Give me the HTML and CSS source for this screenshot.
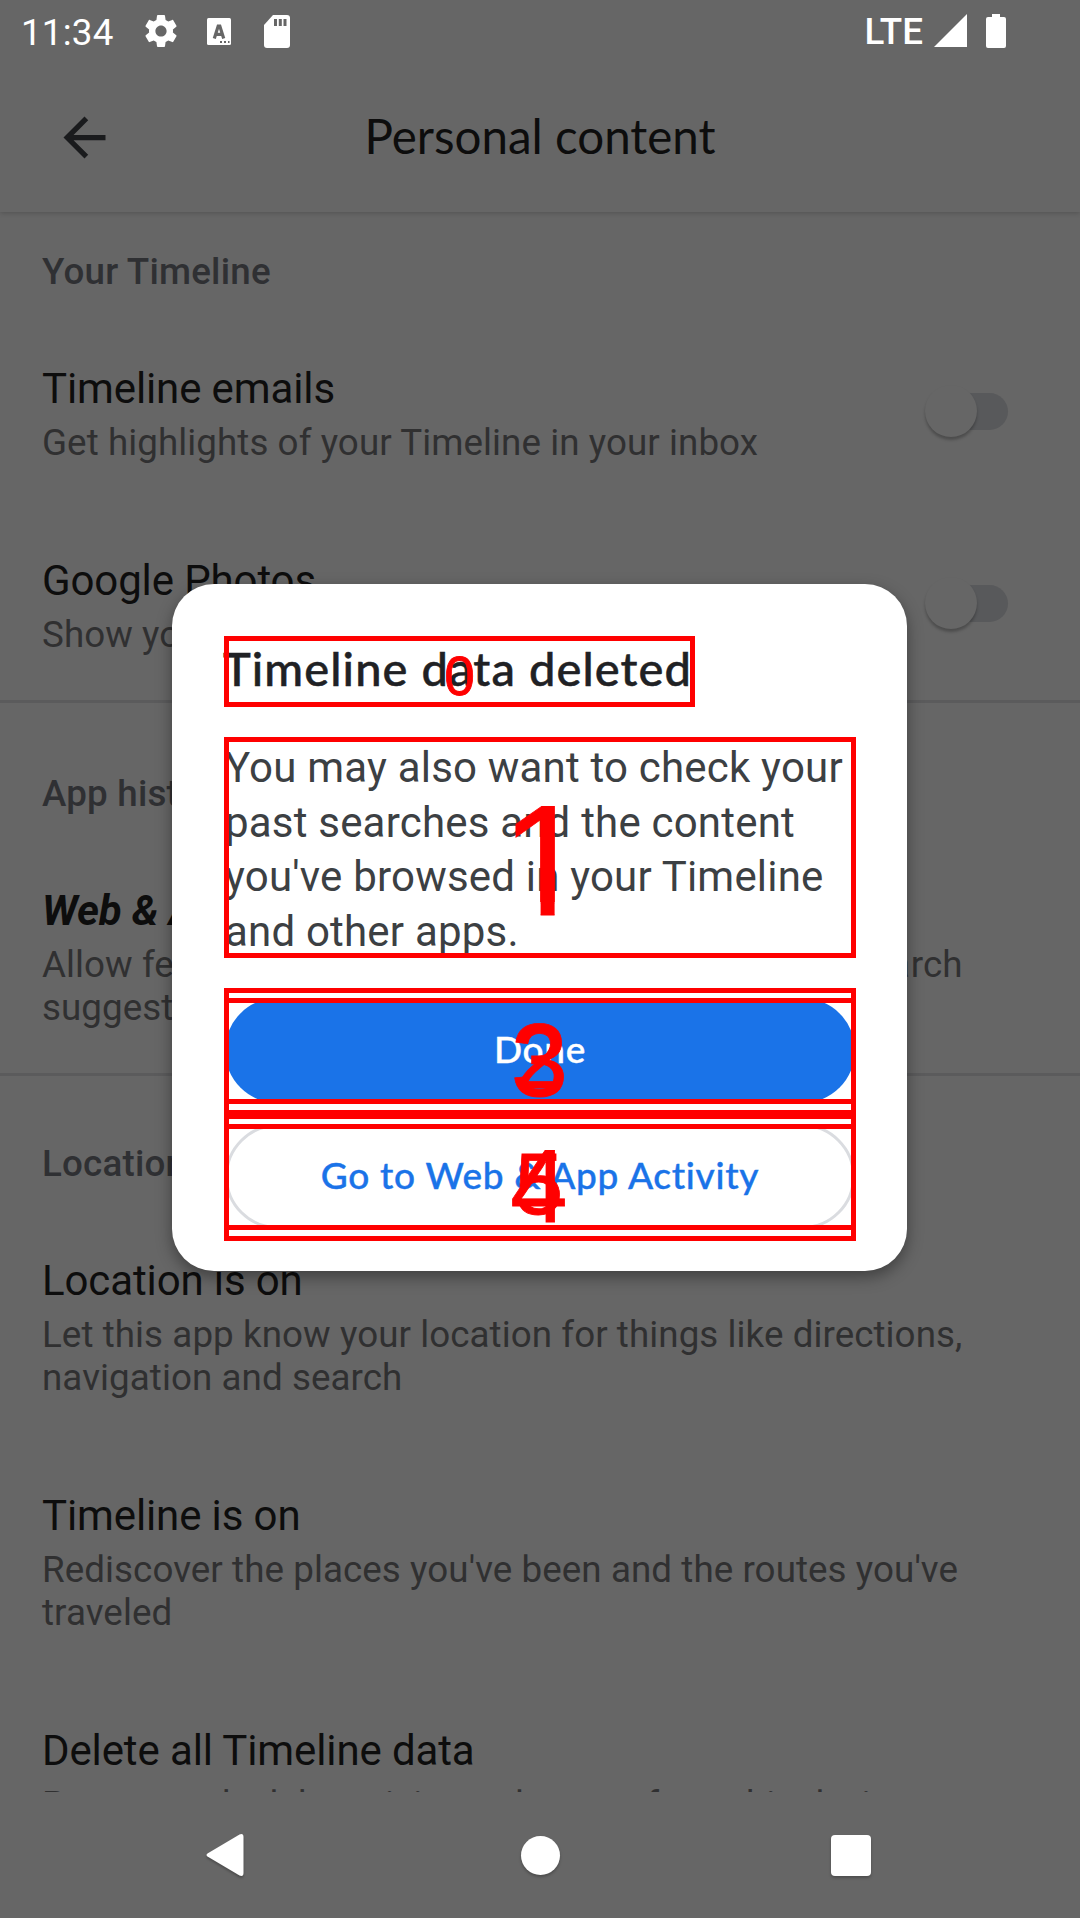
FILE: index.html
```html
<!DOCTYPE html>
<html lang="en">
<head>
<meta charset="utf-8">
<title>Personal content</title>
<link rel="stylesheet" href="styles.css">
</head>
<body>
<div class="screen">
  <header class="status">
    <span class="clock">11:34</span>
    <svg class="gear" viewBox="2 2 20 20"><path fill-rule="evenodd" d="M19.43 12.98c.04-.32.07-.64.07-.98s-.03-.66-.07-.98l2.11-1.65c.19-.15.24-.42.12-.64l-2-3.46c-.12-.22-.39-.3-.61-.22l-2.49 1c-.52-.4-1.08-.73-1.69-.98l-.38-2.65C14.46 2.18 14.25 2 14 2h-4c-.25 0-.46.18-.49.42l-.38 2.65c-.61.25-1.17.59-1.69.98l-2.49-1c-.23-.09-.49 0-.61.22l-2 3.46c-.13.22-.07.49.12.64l2.11 1.65c-.04.32-.07.65-.07.98s.03.66.07.98l-2.11 1.65c-.19.15-.24.42-.12.64l2 3.46c.12.22.39.3.61.22l2.49-1c.52.4 1.08.73 1.69.98l.38 2.65c.03.24.24.42.49.42h4c.25 0 .46-.18.49-.42l.38-2.65c.61-.25 1.17-.59 1.69-.98l2.49 1c.23.09.49 0 .61-.22l2-3.46c.12-.22.07-.49-.12-.64l-2.11-1.65zM12 15.500c-1.930 0-3.500-1.570-3.500-3.500s1.570-3.500 3.500-3.500 3.500 1.570 3.500 3.500-1.570 3.500-3.500 3.500z"/></svg>
    <svg class="keyboard" viewBox="0 0 24 27"><rect width="24" height="27" rx="1.500"/><path class="cut" d="M7.300 20.500 11.200 8h1.600l3.900 12.500M8.500 16.300h7"/><path class="dots" d="M13 24h2M17 24h2M21 24h1.500"/></svg>
    <svg class="sdcard" viewBox="0 0 26 33"><path d="M9 0h14a3 3 0 0 1 3 3v27a3 3 0 0 1-3 3H3a3 3 0 0 1-3-3V10z"/><path class="pins" d="M11.500 4v7M16.300 4v7M21 4v7"/></svg>
    <span class="lte">LTE</span>
    <svg class="signal" viewBox="0 0 33 33"><path d="M33 0v33H0z"/></svg>
    <svg class="battery" viewBox="0 0 20 34"><path d="M6 0h8v3h4a2 2 0 0 1 2 2v27a2 2 0 0 1-2 2H2a2 2 0 0 1-2-2V5a2 2 0 0 1 2-2h4z"/></svg>
  </header>

  <div class="toolbar">
    <svg class="back" viewBox="0 0 24 24"><path d="M20 11H7.830l5.590-5.590L12 4l-8 8 8 8 1.410-1.410L7.830 13H20v-2z"/></svg>
    <h1>Personal content</h1>
  </div>

  <main class="list">
    <section>
      <h2>Your Timeline</h2>
      <div class="item">
        <div class="copy"><h3>Timeline emails</h3><p>Get highlights of your Timeline in your inbox</p></div>
        <span class="switch"></span>
      </div>
      <div class="item">
        <div class="copy"><h3>Google Photos</h3><p>Show your photos</p></div>
        <span class="switch"></span>
      </div>
    </section>
    <section class="history">
      <h2>App history</h2>
      <div class="item">
        <div class="copy"><h3 class="strong">Web &amp; App Activity</h3><p>Allow fe<span class="loose">atures like commute predictions, better sea</span>rch<br>suggestions</p></div>
      </div>
    </section>
    <section class="location">
      <h2>Location settings</h2>
      <div class="item">
        <div class="copy"><h3>Location is on</h3><p>Let this app know your location for things like directions,<br>navigation and search</p></div>
      </div>
      <div class="item">
        <div class="copy"><h3>Timeline is on</h3><p>Rediscover the places you've been and the routes you've<br>traveled</p></div>
      </div>
      <div class="item">
        <div class="copy"><h3>Delete all Timeline data</h3><p>Permanently delete visits and routes from this device</p></div>
      </div>
    </section>
  </main>

  <nav class="navbar">
    <svg class="nav-back" viewBox="0 0 38 42"><path d="M33.500.5 1.500 19.500q-2 1.500 0 3L33.500 41.500q4 1.500 4-2.500V3q0-4-4-2.500z"/></svg>
    <span class="nav-home"></span>
    <span class="nav-recent"></span>
  </nav>

  <div class="dialog">
    <h2>Timeline data deleted</h2>
    <p>You may also want to check your<br>past searches and the content<br>you've browsed in your Timeline<br>and other apps.</p>
    <button class="done">Done</button>
    <button class="activity">Go to Web &amp; App Activity</button>
  </div>

  <svg class="marks" viewBox="0 0 1080 1918">
    <defs><clipPath id="stem"><path d="M490 790h100v112h-35.400v14h-14v-14H490z"/></clipPath></defs>
    <g class="frames">
      <rect x="226.500" y="638.500" width="466" height="66"/>
      <rect x="226.500" y="739.500" width="627" height="216"/>
      <rect x="226.500" y="990.500" width="627" height="122"/>
      <rect x="226.500" y="1000.500" width="627" height="101"/>
      <rect x="226.500" y="1116.500" width="627" height="122"/>
      <rect x="226.500" y="1126.500" width="627" height="101"/>
    </g>
    <g class="digits">
      <text x="459.500" y="695" font-size="55">0</text>
      <text x="544.800" y="915" font-size="158" clip-path="url(#stem)">1</text>
      <text x="539.500" y="1088" font-size="87">2</text>
      <text x="539.500" y="1096" font-size="103">3</text>
      <text x="539" y="1222" font-size="103">4</text>
      <text x="539" y="1214" font-size="87">5</text>
    </g>
  </svg>
</div>
</body>
</html>
```
FILE: styles.css
```css
* { box-sizing: border-box; }
body, h1, h2, h3, p { margin: 0; }
body { background: #666; font-family: Roboto, sans-serif; }
svg { display: block; flex: none; }

.screen {
  position: relative;
  display: flex;
  flex-direction: column;
  width: 1080px;
  height: 1918px;
  overflow: hidden;
  background: #666;
}

.status {
  position: relative;
  z-index: 1;
  display: flex;
  height: 63px;
  padding: 14px 74px 0 21px;
  background: #666;
  color: #fff;
  font-size: 36.75px;
  line-height: 38px;
}
.status svg { fill: #fff; }
.clock { width: 124px; letter-spacing: .2px; }
.gear { width: 32px; height: 34px; margin-right: 30px; }
.keyboard { width: 24px; height: 27px; margin: 4px 33px 0 0; }
.keyboard .cut { fill: none; stroke: #666; stroke-width: 3.200; }
.keyboard .dots { stroke: #666; stroke-width: 2; }
.sdcard { width: 26px; height: 33px; margin-top: 1px; }
.sdcard .pins { stroke: #666; stroke-width: 3; }
.lte { margin-left: auto; margin-right: 11px; font-weight: 500; line-height: 35px; }
.signal { width: 33px; height: 33px; margin-right: 19px; }
.battery { width: 20px; height: 34px; }

.toolbar {
  display: grid;
  grid-template-columns: 117px 1fr 117px;
  align-items: center;
  height: 149px;
  box-shadow: 0 1px 5px rgba(0, 0, 0, .2);
}
.back { width: 63px; height: 63px; margin-left: 53px; fill: #1a1b1d; }
.toolbar h1 {
  padding-bottom: 4px;
  color: #0d0d0d;
  font: 400 47.500px/58px Lato, sans-serif;
  text-align: center;
}

.list { height: 1580px; overflow: hidden; }
section h2 {
  padding: 38px 42px 25px;
  color: #2f3033;
  font-size: 36.75px;
  font-weight: 500;
  line-height: 43px;
  letter-spacing: .2px;
}
.history, .location { margin-top: -2px; border-top: 3px solid #5b5b5c; }
.history h2 { padding-top: 69px; }
.location h2 { padding-top: 66px; }
.item { display: flex; align-items: center; padding: 46px 72px 46px 42px; }
.copy { flex: 1; display: flex; flex-direction: column; gap: 8px; white-space: nowrap; }
.item h3 { color: #0d0d0d; font-size: 42px; font-weight: 400; line-height: 49px; letter-spacing: -.12px; }
.item h3.strong { font-weight: 700; font-style: italic; }
.item p { color: #303031; font-size: 36.75px; line-height: 43px; letter-spacing: .07px; }
.item .loose { letter-spacing: .75px; }

.switch {
  position: relative;
  width: 72px;
  height: 37px;
  margin-top: -5px;
  border-radius: 19px;
  background: #58595b;
}
.switch::before {
  content: "";
  position: absolute;
  left: -11px;
  top: -8px;
  width: 52px;
  height: 52px;
  border-radius: 50%;
  background: #666;
  box-shadow: 0 3px 3px rgba(0, 0, 0, .25);
}

.navbar {
  display: flex;
  align-items: center;
  justify-content: space-between;
  height: 126px;
  padding: 0 209px 0 206px;
}
.navbar svg { fill: #fff; filter: drop-shadow(0 2px 1px rgba(0, 0, 0, .25)); }
.nav-back { width: 38px; height: 42px; }
.nav-home, .nav-recent { width: 39px; height: 39px; background: #fff; box-shadow: 0 2px 3px rgba(0, 0, 0, .25); }
.nav-home { margin-left: 5px; border-radius: 50%; }
.nav-recent { width: 40px; height: 41px; border-radius: 4px; }

.dialog {
  position: absolute;
  left: 172px;
  top: 584px;
  display: flex;
  flex-direction: column;
  width: 735px;
  height: 687px;
  padding: 52px 52px 41px 53px;
  border-radius: 42px;
  background: #fff;
  box-shadow: 0 6px 16px rgba(0, 0, 0, .38);
}
.dialog h2 {
  color: #202124;
  font: 500 47px/64px Lato, sans-serif;
  letter-spacing: 1.100px;
  white-space: nowrap;
  text-indent: -2px;
  -webkit-text-stroke: .5px #202124;
}
.dialog p {
  margin: 41px 0 39px;
  color: #3c4043;
  font-size: 42px;
  line-height: 54.500px;
  letter-spacing: .2px;
  white-space: nowrap;
}
.dialog button {
  height: 105px;
  padding: 0 0 4px;
  border: 0;
  border-radius: 53px;
  font: 500 37px/44px Lato, sans-serif;
  letter-spacing: .7px;
  -webkit-text-stroke: .4px;
}
.dialog .done { background: #1a73e8; color: #fff; }
.dialog .activity { margin-top: 21px; border: 3px solid #dadce0; background: #fff; color: #1a73e8; }

.marks { position: absolute; left: 0; top: 0; width: 1080px; height: 1918px; }
.frames { fill: none; stroke: #f00; stroke-width: 5; }
.digits { fill: #f00; stroke: #f00; stroke-width: .8; font-family: "Liberation Sans", Arial, sans-serif; text-anchor: middle; }
```
